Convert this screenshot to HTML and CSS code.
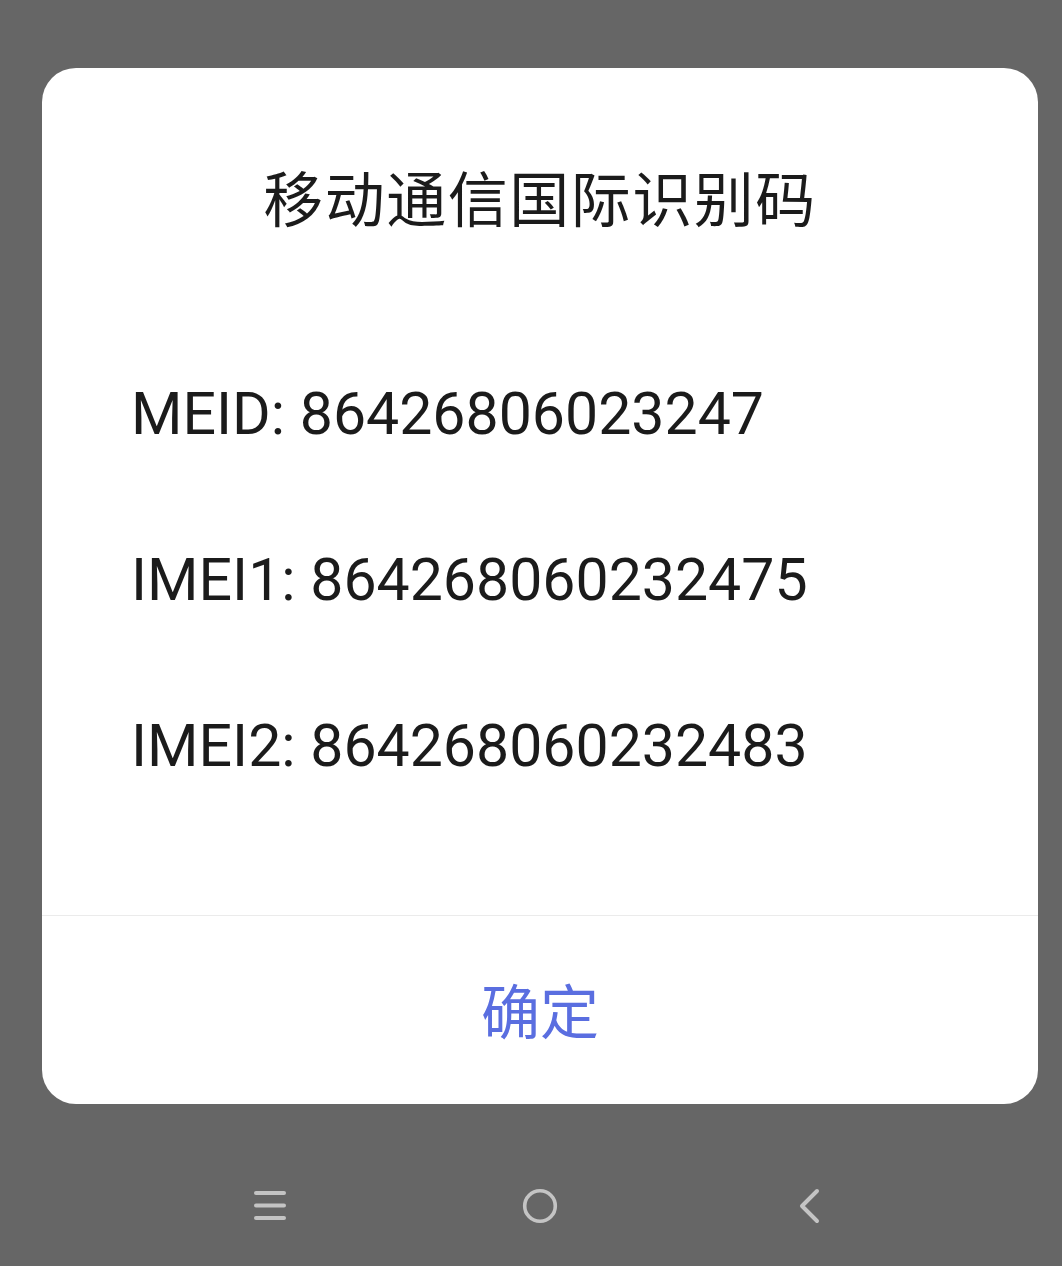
FILE: index.html
```html
<!DOCTYPE html>
<html lang="zh-CN">
<head>
<meta charset="utf-8">
<title>移动通信国际识别码</title>
<link rel="stylesheet" href="styles.css">
</head>
<body>
<div class="screen">
  <div class="dialog">
    <div class="title">移动通信国际识别码</div>
    <div class="content">
      <div class="line">MEID: 86426806023247</div>
      <div class="line">IMEI1: 864268060232475</div>
      <div class="line">IMEI2: 864268060232483</div>
    </div>
    <div class="actions">
      <div class="btn">确定</div>
    </div>
  </div>
  <div class="navbar">
    <div class="nav-item">
      <svg width="34" height="32" viewBox="0 0 34 32"><g stroke="#c4c4c4" stroke-width="4" stroke-linecap="round"><line x1="3" y1="3" x2="31" y2="3"/><line x1="3" y1="15.5" x2="31" y2="15.5"/><line x1="3" y1="28" x2="31" y2="28"/></g></svg>
    </div>
    <div class="nav-item">
      <svg width="38" height="38" viewBox="0 0 38 38"><circle cx="19" cy="19" r="15.3" fill="none" stroke="#c4c4c4" stroke-width="3.6"/></svg>
    </div>
    <div class="nav-item">
      <svg width="26" height="36" viewBox="0 0 26 36"><polyline points="20,3 5,18 20,33" fill="none" stroke="#c4c4c4" stroke-width="4" stroke-linecap="round" stroke-linejoin="round"/></svg>
    </div>
  </div>
</div>
</body>
</html>
```

FILE: styles.css
```css
html, body {
  margin: 0;
  padding: 0;
  background: #666666;
}
body {
  width: 1062px;
  height: 1266px;
  overflow: hidden;
  font-family: Roboto, "Noto Sans CJK SC", sans-serif;
}
.screen {
  display: flex;
  flex-direction: column;
  height: 1266px;
}
.dialog {
  margin: 68px 24px 0 42px;
  height: 1036px;
  background: #ffffff;
  border-radius: 34px;
  display: flex;
  flex-direction: column;
  overflow: hidden;
}
.title {
  padding-top: 88px;
  height: 80px;
  line-height: 80px;
  text-align: center;
  font-family: "Noto Sans CJK SC", sans-serif;
  font-size: 60px;
  letter-spacing: 1.5px;
  color: #1b1b1b;
}
.content {
  padding: 95px 40px 0 89px;
  flex: 1;
}
.line {
  height: 166px;
  line-height: 166px;
  font-size: 59px;
  color: #1b1b1b;
  white-space: nowrap;
}
.actions {
  height: 188px;
  border-top: 1px solid #ebebeb;
  display: flex;
  align-items: center;
  justify-content: center;
}
.btn {
  font-family: "Noto Sans CJK SC", sans-serif;
  font-size: 59px;
  line-height: 80px;
  color: #5a6ee0;
  padding-bottom: 2px;
}
.navbar {
  flex: 1;
  display: flex;
  align-items: center;
  padding: 42px 117px 0 135px;
}
.nav-item {
  width: 270px;
  display: flex;
  justify-content: center;
  align-items: center;
}
```
